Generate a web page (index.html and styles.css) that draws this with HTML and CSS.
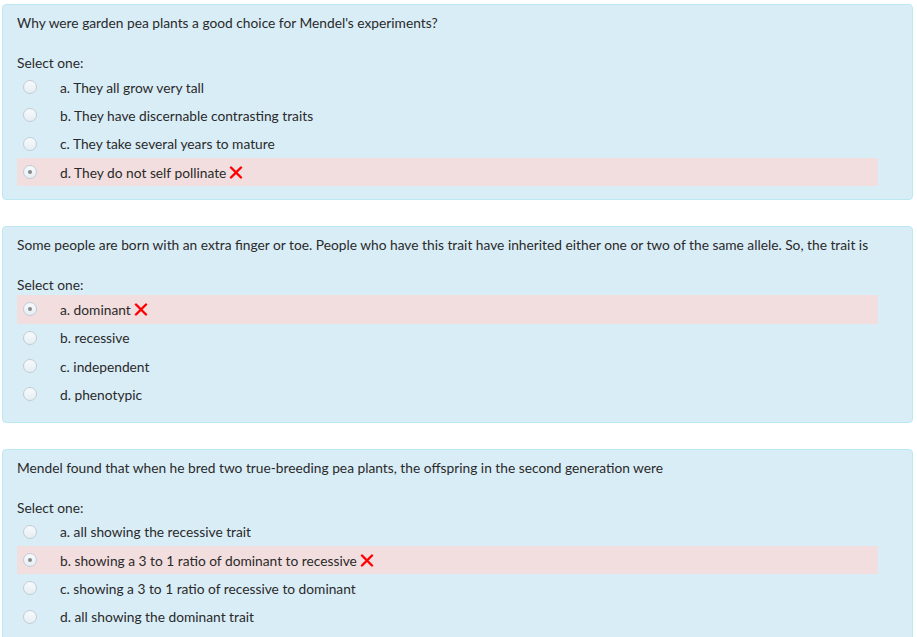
FILE: index.html
```html
<!DOCTYPE html>
<html>
<head>
  <meta charset="UTF-8">
  <title>Quiz review</title>
  <link rel="stylesheet" href="styles.css">
</head>
<body>
  <div class="question">
    <div class="qtext">Why were garden pea plants a good choice for Mendel's experiments?</div>
    <div class="prompt">Select one:</div>
    <div class="answer">
      <div class="option"><span class="radio"></span><span class="label">a. They all grow very tall</span></div>
      <div class="option"><span class="radio"></span><span class="label">b. They have discernable contrasting traits</span></div>
      <div class="option"><span class="radio"></span><span class="label">c. They take several years to mature</span></div>
      <div class="option incorrect"><span class="radio checked"></span><span class="label">d. They do not self pollinate</span><svg class="cross" viewBox="0 0 14 13"><path d="M2 1.5 L12 11.5 M12 1.5 L2 11.5"/></svg></div>
    </div>
  </div>

  <div class="question">
    <div class="qtext">Some people are born with an extra finger or toe. People who have this trait have inherited either one or two of the same allele. So, the trait is</div>
    <div class="prompt">Select one:</div>
    <div class="answer">
      <div class="option incorrect"><span class="radio checked"></span><span class="label">a. dominant</span><svg class="cross" viewBox="0 0 14 13"><path d="M2 1.5 L12 11.5 M12 1.5 L2 11.5"/></svg></div>
      <div class="option"><span class="radio"></span><span class="label">b. recessive</span></div>
      <div class="option"><span class="radio"></span><span class="label">c. independent</span></div>
      <div class="option"><span class="radio"></span><span class="label">d. phenotypic</span></div>
    </div>
  </div>

  <div class="question">
    <div class="qtext">Mendel found that when he bred two true-breeding pea plants, the offspring in the second generation were</div>
    <div class="prompt">Select one:</div>
    <div class="answer">
      <div class="option"><span class="radio"></span><span class="label">a. all showing the recessive trait</span></div>
      <div class="option incorrect"><span class="radio checked"></span><span class="label">b. showing a 3 to 1 ratio of dominant to recessive</span><svg class="cross" viewBox="0 0 14 13"><path d="M2 1.5 L12 11.5 M12 1.5 L2 11.5"/></svg></div>
      <div class="option"><span class="radio"></span><span class="label">c. showing a 3 to 1 ratio of recessive to dominant</span></div>
      <div class="option"><span class="radio"></span><span class="label">d. all showing the dominant trait</span></div>
    </div>
  </div>
</body>
</html>
```

FILE: styles.css
```css
body {
  margin: 0;
  padding: 4px 4px 0 2px;
  font-family: Lato, "Open Sans", sans-serif;
  font-size: 13.75px;
  color: #2a2a2a;
  background-color: #fff;
}

.question {
  background-color: #d9edf7;
  border: 1px solid #bce8f1;
  border-radius: 4px;
  padding: 9px 34px 13px 14px;
  margin-bottom: 26px;
}

.qtext {
  line-height: 18px;
}

.prompt {
  line-height: 18px;
  margin-top: 22px;
  margin-bottom: 1px;
}

.option {
  display: flex;
  align-items: center;
  height: 28.34px;
  padding-left: 6px;
}

.option.incorrect {
  background-color: #f2dede;
}

.radio {
  width: 12px;
  height: 12px;
  border: 1px solid #c2ccd4;
  border-radius: 50%;
  background: linear-gradient(#f7fafc, #e6eef4);
  margin-right: 23px;
  display: flex;
  align-items: center;
  justify-content: center;
}

.radio.checked::after {
  content: "";
  width: 4px;
  height: 4px;
  border-radius: 50%;
  background-color: #888;
}

.cross {
  width: 14px;
  height: 13px;
  margin-left: 3px;
  fill: none;
  stroke: #f00;
  stroke-width: 2.4;
  stroke-linecap: round;
}
```
